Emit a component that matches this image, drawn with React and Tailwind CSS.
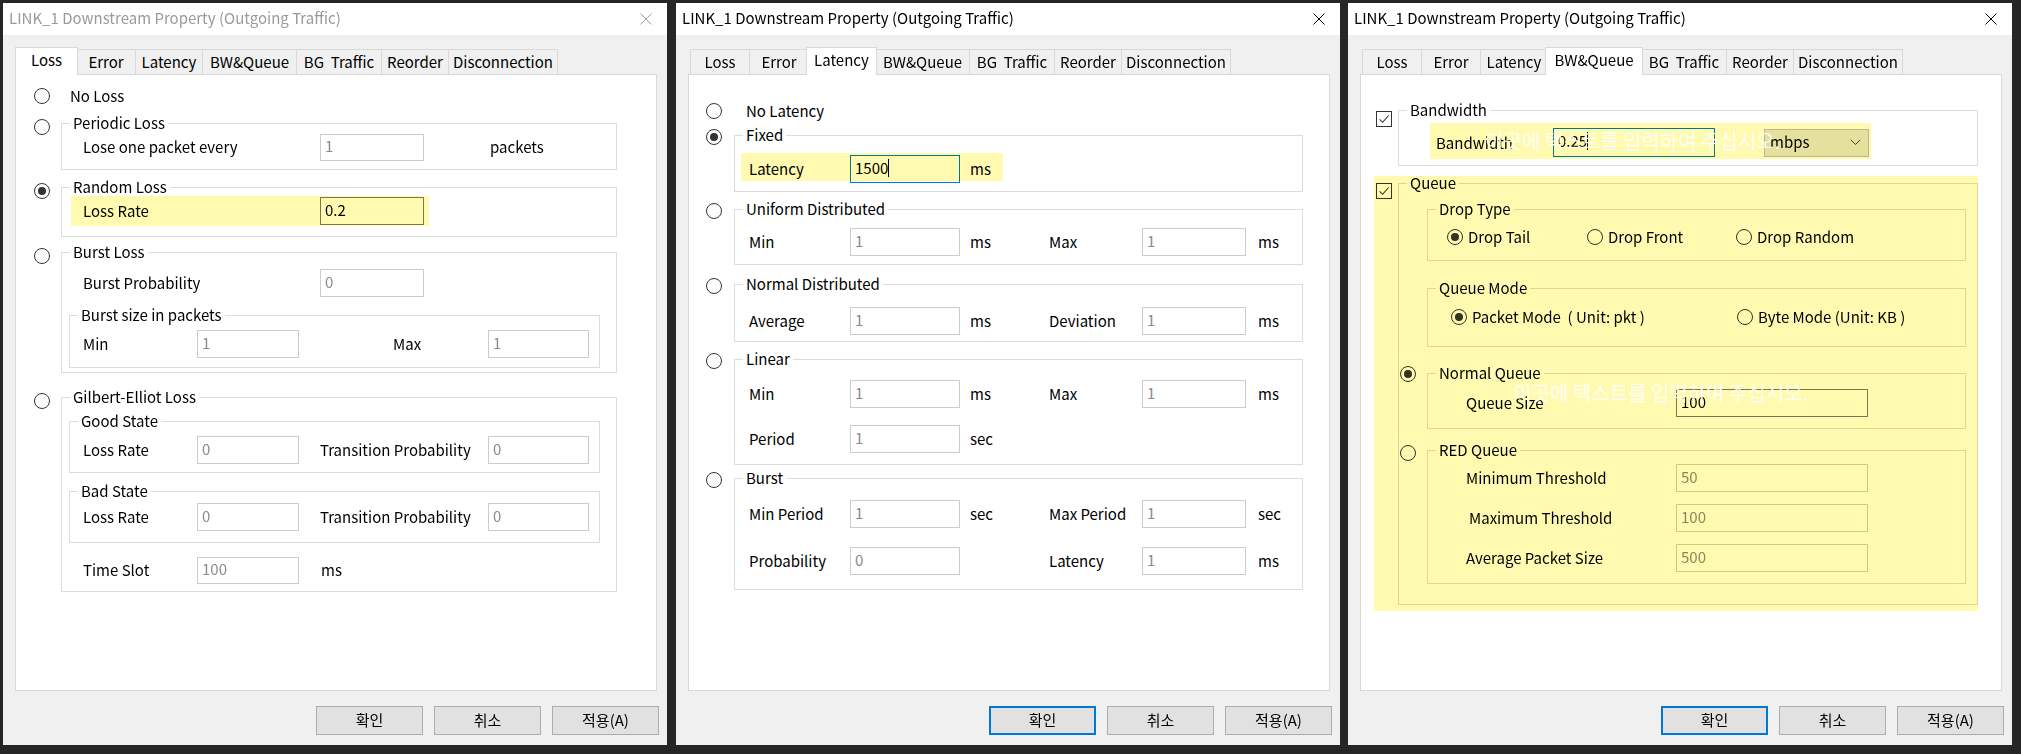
import React from "react";

const TABS = [
  { t: "Loss", w: "w-[59px]", aw: "w-[63px]" },
  { t: "Error", w: "w-[59px]", aw: "w-[63px]" },
  { t: "Latency", w: "w-[67px]", aw: "w-[71px]" },
  { t: "BW&Queue", w: "w-[94px]", aw: "w-[98px]" },
  { t: "BG  Traffic", w: "w-[85px]", aw: "w-[89px]" },
  { t: "Reorder", w: "w-[67px]", aw: "w-[71px]" },
  { t: "Disconnection", w: "w-[110px]", aw: "w-[114px]" },
];

function Tabs({ active }) {
  return (
    <div className="relative z-10 flex items-end h-[27px] pl-[2px]">
      {TABS.map((tab, i) =>
        i === active ? (
          <div
            key={tab.t}
            className={`${tab.aw} relative z-10 -mx-[2px] h-[28px] -mb-px bg-white border-x border-t border-[#d9d9d9] flex items-center justify-center pb-[4px] whitespace-pre`}
          >
            {tab.t}
          </div>
        ) : (
          <div
            key={tab.t}
            className={`${tab.w} h-[25px] bg-[#f0f0f0] border-l border-t border-[#d9d9d9] last:border-r flex items-center justify-center pb-[1px] whitespace-pre`}
          >
            {tab.t}
          </div>
        )
      )}
    </div>
  );
}

function Radio({ on, className = "" }) {
  return (
    <span className={`w-[16px] h-[16px] shrink-0 rounded-full border border-[#333] bg-white flex items-center justify-center ${className}`}>
      {on && <span className="w-[8px] h-[8px] rounded-full bg-[#333]" />}
    </span>
  );
}

function Check({ className = "" }) {
  return (
    <span className={`w-[16px] h-[16px] shrink-0 border border-[#333] bg-white flex items-center justify-center ${className}`}>
      <svg width="12" height="12" viewBox="0 0 12 12">
        <path d="M1.6 6.3 L4.6 9.3 L10.6 2.5" fill="none" stroke="#333" strokeWidth="1.1" />
      </svg>
    </span>
  );
}

function Field({ value, w, h = "h-[28px]", kind = "off" }) {
  const look =
    kind === "off"
      ? "border-[#cccccc] text-[#8a8a8a]"
      : kind === "on"
      ? "border-[#7a7a7a] text-black"
      : "border-[#0078d7] text-black";
  return (
    <div className={`${w} ${h} shrink-0 border bg-white flex items-center pl-[4px] pb-[3px] ${look}`}>
      <span>{value}</span>
      {kind === "focus" && <span className="w-px h-[18px] bg-black" />}
    </div>
  );
}

function Group({ label, className = "", children }) {
  return (
    <div className={`relative shrink-0 border border-[#dcdcdc] ${className}`}>
      <span className="absolute left-[8px] -top-[11px] bg-white px-[3px] leading-[20px]">{label}</span>
      {children}
    </div>
  );
}

function Row({ className = "", children }) {
  return <div className={`flex items-center h-[28px] ${className}`}>{children}</div>;
}

function L({ className = "", children }) {
  return <span className={`shrink-0 whitespace-pre ${className}`}>{children}</span>;
}

// yellow highlighter laid over the form
function Mark({ className }) {
  return <div className={`absolute pointer-events-none mix-blend-multiply bg-[#fffaaf] ${className}`} />;
}

function Ghost({ className }) {
  return (
    <div className={`absolute pointer-events-none whitespace-pre text-[20px] leading-[24px] text-white/90 ${className}`}>
      이곳에 텍스트를 입력하여 주십시오.
    </div>
  );
}

function Btn({ primary, children }) {
  return (
    <div
      className={`w-[107px] h-[29px] flex items-center justify-center bg-[#e1e1e1] pb-[2px] ${
        primary ? "border-2 border-[#0078d7]" : "border border-[#adadad]"
      }`}
    >
      {children}
    </div>
  );
}

function Panel({ active, dim, primary, children }) {
  return (
    <div className="w-[664px] h-[742px] shrink-0 flex flex-col bg-[#f0f0f0]">
      <div
        className={`h-[32px] shrink-0 bg-white flex items-center justify-between pl-[6px] pr-[15px] text-[15px] ${
          dim ? "text-[#9a9a9a]" : "text-black"
        }`}
      >
        <span className="pb-[2px]">LINK_1 Downstream Property (Outgoing Traffic)</span>
        <svg width="12" height="12" viewBox="0 0 12 12">
          <path d="M0.5 0.5 L11.5 11.5 M11.5 0.5 L0.5 11.5" stroke="currentColor" strokeWidth="1" />
        </svg>
      </div>
      <div className="pl-[12px] pt-[12px]">
        <Tabs active={active} />
        <div className="relative w-[642px] h-[617px] bg-white border border-[#d9d9d9]">{children}</div>
        <div className="flex justify-end gap-[11px] w-[644px] mt-[15px]">
          <Btn primary={primary}>확인</Btn>
          <Btn>취소</Btn>
          <Btn>적용(A)</Btn>
        </div>
      </div>
    </div>
  );
}

function LossTab() {
  return (
    <>
      <div className="flex items-center h-[20px] mt-[11px]">
        <Radio className="ml-[18px]" />
        <span className="ml-[20px]">No Loss</span>
      </div>

      <div className="flex mt-[17px]">
        <div className="w-[45px] shrink-0 pl-[18px]">
          <Radio className="-mt-[4px]" />
        </div>
        <Group label="Periodic Loss" className="w-[556px] h-[47px]">
          <Row className="mt-[9px] h-[27px]">
            <L className="ml-[21px] w-[237px]">Lose one packet every</L>
            <Field w="w-[104px]" h="h-[27px]" value="1" />
            <L className="ml-[66px]">packets</L>
          </Row>
        </Group>
      </div>

      <div className="flex mt-[17px]">
        <div className="w-[45px] shrink-0 pl-[18px]">
          <Radio on className="-mt-[4px]" />
        </div>
        <Group label="Random Loss" className="w-[556px] h-[50px]">
          <Row className="mt-[9px]">
            <L className="ml-[21px] w-[237px]">Loss Rate</L>
            <Field w="w-[104px]" kind="on" value="0.2" />
          </Row>
        </Group>
      </div>

      <div className="flex mt-[15px]">
        <div className="w-[45px] shrink-0 pl-[18px]">
          <Radio className="-mt-[4px]" />
        </div>
        <Group label="Burst Loss" className="w-[556px] h-[121px]">
          <Row className="mt-[16px]">
            <L className="ml-[21px] w-[237px]">Burst Probability</L>
            <Field w="w-[104px]" value="0" />
          </Row>
          <Group label="Burst size in packets" className="mt-[18px] ml-[7px] w-[531px] h-[53px]">
            <Row className="mt-[14px]">
              <L className="ml-[13px] w-[114px]">Min</L>
              <Field w="w-[102px]" value="1" />
              <L className="ml-[94px] w-[95px]">Max</L>
              <Field w="w-[101px]" value="1" />
            </Row>
          </Group>
        </Group>
      </div>

      <div className="flex mt-[24px]">
        <div className="w-[45px] shrink-0 pl-[18px]">
          <Radio className="-mt-[4px]" />
        </div>
        <Group label="Gilbert-Elliot Loss" className="w-[556px] h-[195px]">
          <Group label="Good State" className="mt-[23px] ml-[7px] w-[531px] h-[52px]">
            <Row className="mt-[14px]">
              <L className="ml-[13px] w-[114px]">Loss Rate</L>
              <Field w="w-[102px]" value="0" />
              <L className="ml-[21px] w-[168px]">Transition Probability</L>
              <Field w="w-[101px]" value="0" />
            </Row>
          </Group>
          <Group label="Bad State" className="mt-[18px] ml-[7px] w-[531px] h-[52px]">
            <Row className="mt-[11px]">
              <L className="ml-[13px] w-[114px]">Loss Rate</L>
              <Field w="w-[102px]" value="0" />
              <L className="ml-[21px] w-[168px]">Transition Probability</L>
              <Field w="w-[101px]" value="0" />
            </Row>
          </Group>
          <Row className="mt-[13px] h-[27px]">
            <L className="ml-[21px] w-[114px]">Time Slot</L>
            <Field w="w-[102px]" h="h-[27px]" value="100" />
            <L className="ml-[22px]">ms</L>
          </Row>
        </Group>
      </div>

      <Mark className="left-[55px] top-[121px] w-[358px] h-[30px]" />
    </>
  );
}

function LatRow({ className, a, av, au, b, bv, bu, kind }) {
  return (
    <Row className={className}>
      <L className="ml-[14px] w-[101px]">{a}</L>
      <Field w="w-[110px]" value={av} kind={kind} />
      <L className="ml-[10px] w-[79px]">{au}</L>
      {b && (
        <>
          <L className="w-[93px]">{b}</L>
          <Field w="w-[104px]" value={bv} />
          <L className="ml-[12px]">{bu}</L>
        </>
      )}
    </Row>
  );
}

function LatencyTab() {
  return (
    <>
      <div className="flex items-center h-[20px] mt-[26px]">
        <Radio className="ml-[17px]" />
        <span className="ml-[24px]">No Latency</span>
      </div>

      <div className="flex mt-[14px]">
        <div className="w-[45px] shrink-0 pl-[17px]">
          <Radio on className="-mt-[6px]" />
        </div>
        <Group label="Fixed" className="w-[569px] h-[57px]">
          <LatRow className="mt-[19px]" a="Latency" av="1500" au="ms" kind="focus" />
        </Group>
      </div>

      <div className="flex mt-[17px]">
        <div className="w-[45px] shrink-0 pl-[17px]">
          <Radio className="-mt-[6px]" />
        </div>
        <Group label="Uniform Distributed" className="w-[569px] h-[56px]">
          <LatRow className="mt-[18px]" a="Min" av="1" au="ms" b="Max" bv="1" bu="ms" />
        </Group>
      </div>

      <div className="flex mt-[19px]">
        <div className="w-[45px] shrink-0 pl-[17px]">
          <Radio className="-mt-[6px]" />
        </div>
        <Group label="Normal Distributed" className="w-[569px] h-[58px]">
          <LatRow className="mt-[22px]" a="Average" av="1" au="ms" b="Deviation" bv="1" bu="ms" />
        </Group>
      </div>

      <div className="flex mt-[17px]">
        <div className="w-[45px] shrink-0 pl-[17px]">
          <Radio className="-mt-[6px]" />
        </div>
        <Group label="Linear" className="w-[569px] h-[106px]">
          <LatRow className="mt-[20px]" a="Min" av="1" au="ms" b="Max" bv="1" bu="ms" />
          <LatRow className="mt-[17px]" a="Period" av="1" au="sec" />
        </Group>
      </div>

      <div className="flex mt-[13px]">
        <div className="w-[45px] shrink-0 pl-[17px]">
          <Radio className="-mt-[6px]" />
        </div>
        <Group label="Burst" className="w-[569px] h-[112px]">
          <LatRow className="mt-[21px]" a="Min Period" av="1" au="sec" b="Max Period" bv="1" bu="sec" />
          <LatRow className="mt-[19px]" a="Probability" av="0" au="" b="Latency" bv="1" bu="ms" />
        </Group>
      </div>

      <Mark className="left-[52px] top-[78px] w-[262px] h-[28px]" />
    </>
  );
}

function QueueTab() {
  return (
    <>
      <div className="flex mt-[35px]">
        <div className="w-[37px] shrink-0 pl-[15px]">
          <Check className="mt-[1px]" />
        </div>
        <Group label="Bandwidth" className="w-[580px] h-[56px]">
          <Row className="mt-[17px] h-[29px]">
            <L className="ml-[37px] w-[117px]">Bandwidth</L>
            <Field w="w-[162px]" h="h-[29px]" kind="focus" value="0.25" />
            <div className="ml-[49px] w-[105px] h-[28px] shrink-0 bg-[#e5e5e5] border border-[#bdbdbd] flex items-center pl-[5px] pr-[7px] pb-[2px]">
              <span>mbps</span>
              <svg className="ml-auto mt-[2px]" width="11" height="7" viewBox="0 0 11 7">
                <path d="M0.8 0.8 L5.5 5.5 L10.2 0.8" fill="none" stroke="#444" strokeWidth="1" />
              </svg>
            </div>
          </Row>
        </Group>
      </div>

      <div className="flex mt-[17px]">
        <div className="w-[37px] shrink-0 pl-[15px]">
          <Check />
        </div>
        <Group label="Queue" className="w-[580px] h-[422px]">
          <Group label="Drop Type" className="mt-[25px] ml-[28px] w-[539px] h-[52px]">
            <div className="flex items-center h-[20px] mt-[17px]">
              <div className="ml-[19px] w-[140px] flex items-center gap-[5px]">
                <Radio on />
                <span>Drop Tail</span>
              </div>
              <div className="w-[149px] flex items-center gap-[5px]">
                <Radio />
                <span>Drop Front</span>
              </div>
              <div className="flex items-center gap-[5px]">
                <Radio />
                <span>Drop Random</span>
              </div>
            </div>
          </Group>

          <Group label="Queue Mode" className="mt-[27px] ml-[28px] w-[539px] h-[59px]">
            <div className="flex items-center h-[20px] mt-[18px]">
              <div className="ml-[23px] w-[286px] flex items-center gap-[5px]">
                <Radio on />
                <span className="whitespace-pre">Packet Mode  ( Unit: pkt )</span>
              </div>
              <div className="flex items-center gap-[5px]">
                <Radio />
                <span className="whitespace-pre">Byte Mode (Unit: KB )</span>
              </div>
            </div>
          </Group>

          <div className="flex mt-[26px]">
            <div className="w-[28px] shrink-0 pl-[1px]">
              <Radio on className="-mt-[7px]" />
            </div>
            <Group label="Normal Queue" className="w-[539px] h-[56px]">
              <Row className="mt-[15px]">
                <L className="ml-[38px] w-[210px]">Queue Size</L>
                <Field w="w-[192px]" kind="on" value="100" />
              </Row>
            </Group>
          </div>

          <div className="flex mt-[21px]">
            <div className="w-[28px] shrink-0 pl-[1px]">
              <Radio className="-mt-[5px]" />
            </div>
            <Group label="RED Queue" className="w-[539px] h-[134px]">
              <Row className="mt-[13px]">
                <L className="ml-[38px] w-[210px]">Minimum Threshold</L>
                <Field w="w-[192px]" value="50" />
              </Row>
              <Row className="mt-[12px]">
                <L className="ml-[41px] w-[207px]">Maximum Threshold</L>
                <Field w="w-[192px]" value="100" />
              </Row>
              <Row className="mt-[12px]">
                <L className="ml-[38px] w-[210px]">Average Packet Size</L>
                <Field w="w-[192px]" value="500" />
              </Row>
            </Group>
          </div>
        </Group>
      </div>

      <Mark className="left-[69px] top-[48px] w-[441px] h-[36px]" />
      <Mark className="left-[13px] top-[101px] w-[604px] h-[435px]" />
      <Ghost className="left-[124px] top-[54px]" />
      <Ghost className="left-[152px] top-[306px]" />
    </>
  );
}

export default function App() {
  return (
    <div className="w-[2021px] h-[754px] overflow-hidden bg-[#262626] flex items-start pt-[3px] pl-[3px] text-[15px] leading-[20px] text-black font-['Noto_Sans_CJK_KR',sans-serif]">
      <Panel active={0} dim>
        <LossTab />
      </Panel>
      <div className="w-[9px] shrink-0" />
      <Panel active={2} primary>
        <LatencyTab />
      </Panel>
      <div className="w-[8px] shrink-0" />
      <Panel active={3} primary>
        <QueueTab />
      </Panel>
    </div>
  );
}
